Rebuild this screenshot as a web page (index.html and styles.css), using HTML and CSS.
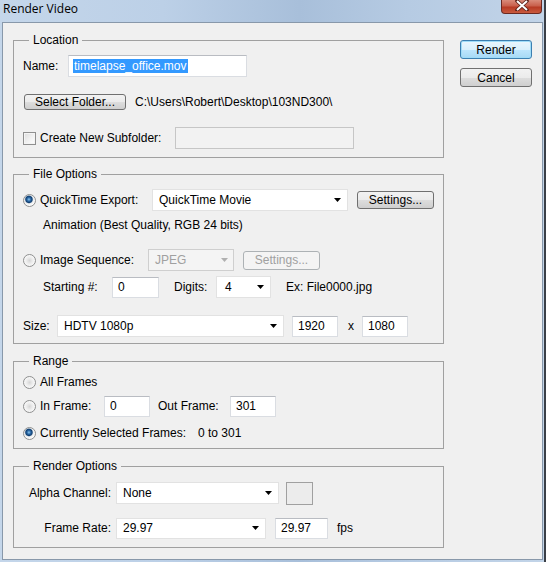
FILE: index.html
```html
<!DOCTYPE html>
<html>
<head>
<meta charset="utf-8">
<link rel="stylesheet" href="styles.css">
</head>
<body>
<div class="window">
  <div class="titlebar">
    <span class="title">Render Video</span>
    <div class="close">
      <svg width="14" height="11" viewBox="0 0 14 11"><path d="M2 1 L12 10 M12 1 L2 10" stroke="#5a2018" stroke-width="3.6" stroke-linecap="round"/><path d="M2 1 L12 10 M12 1 L2 10" stroke="#ffffff" stroke-width="2"/></svg>
    </div>
  </div>
  <div class="client">
    <div class="main">
      <fieldset class="group g-location">
        <legend>Location</legend>
        <div class="gbody col-14">
          <div class="row">
            <span class="lbl w45">Name:</span>
            <div class="input w179 h22"><span class="sel-text">timelapse_office.mov</span></div>
          </div>
          <div class="row">
            <div class="btn w102 ml1">Select Folder...</div>
            <span class="ml9">C:\Users\Robert\Desktop\103ND300\</span>
          </div>
          <div class="row">
            <span class="check"></span>
            <span class="lbl ml4 w135">Create New Subfolder:</span>
            <div class="input disabled w179 h22"></div>
          </div>
        </div>
      </fieldset>

      <fieldset class="group g-file">
        <legend>File Options</legend>
        <div class="gbody">
          <div class="row">
            <span class="radio on"></span>
            <span class="lbl ml4 w112">QuickTime Export:</span>
            <div class="select w196 h22"><span class="stext">QuickTime Movie</span><svg class="arrow" width="7" height="4" viewBox="0 0 7 4"><polygon points="0,0 7,0 3.5,4" fill="#000"/></svg></div>
            <div class="btn w77 ml9 h18">Settings...</div>
          </div>
          <div class="row text-row mt7">
            <span class="ml20">Animation (Best Quality, RGB 24 bits)</span>
          </div>
          <div class="row mt17">
            <span class="radio"></span>
            <span class="lbl ml4 w108">Image Sequence:</span>
            <div class="select dis w86 h22"><span class="stext">JPEG</span><svg class="arrow" width="7" height="4" viewBox="0 0 7 4"><polygon points="0,0 7,0 3.5,4" fill="#b0b0b0"/></svg></div>
            <div class="btn btn-dis w77 ml9 h19">Settings...</div>
          </div>
          <div class="row mt5">
            <span class="lbl ml20 w69">Starting #:</span>
            <div class="input w47 h21">0</div>
            <span class="lbl ml15 w42">Digits:</span>
            <div class="select w55 h22"><span class="stext s-digits">4</span><svg class="arrow" width="7" height="4" viewBox="0 0 7 4"><polygon points="0,0 7,0 3.5,4" fill="#000"/></svg></div>
            <span class="ml15">Ex: File0000.jpg</span>
          </div>
          <div class="row mt17">
            <span class="lbl w34">Size:</span>
            <div class="select w227 h22"><span class="stext s-size">HDTV 1080p</span><svg class="arrow" width="7" height="4" viewBox="0 0 7 4"><polygon points="0,0 7,0 3.5,4" fill="#000"/></svg></div>
            <div class="input ml8 w46 h21">1920</div>
            <span class="lbl ml10 w14">x</span>
            <div class="input w46 h21">1080</div>
          </div>
        </div>
      </fieldset>

      <fieldset class="group g-range">
        <legend>Range</legend>
        <div class="gbody">
          <div class="row">
            <span class="radio"></span>
            <span class="lbl ml4">All Frames</span>
          </div>
          <div class="row mt2">
            <span class="radio"></span>
            <span class="lbl ml4 w64">In Frame:</span>
            <div class="input w46 h21">0</div>
            <span class="lbl ml8 w72">Out Frame:</span>
            <div class="input w46 h21">301</div>
          </div>
          <div class="row mt5">
            <span class="radio on"></span>
            <span class="lbl ml4 w158">Currently Selected Frames:</span>
            <span>0 to 301</span>
          </div>
        </div>
      </fieldset>

      <fieldset class="group g-render">
        <legend>Render Options</legend>
        <div class="gbody">
          <div class="row">
            <span class="lbl w88 right">Alpha Channel:</span>
            <div class="select ml5 w163 h22"><span class="stext">None</span><svg class="arrow" width="7" height="4" viewBox="0 0 7 4"><polygon points="0,0 7,0 3.5,4" fill="#000"/></svg></div>
            <div class="swatch ml7"></div>
          </div>
          <div class="row mt13">
            <span class="lbl w88 right">Frame Rate:</span>
            <div class="select ml5 w150 h21"><span class="stext">29.97</span><svg class="arrow" width="7" height="4" viewBox="0 0 7 4"><polygon points="0,0 7,0 3.5,4" fill="#000"/></svg></div>
            <div class="input ml9 w53 h21">29.97</div>
            <span class="ml9">fps</span>
          </div>
        </div>
      </fieldset>
    </div>
    <div class="side">
      <div class="btn btn-default w72 h19">Render</div>
      <div class="btn w72 h19">Cancel</div>
    </div>
  </div>
</div>
</body>
</html>
```

FILE: styles.css
```css
html, body {
  margin: 0;
  padding: 0;
}
body {
  background: #3a3f47;
  width: 546px;
  height: 562px;
  overflow: hidden;
  font-family: "Liberation Sans", Arial, sans-serif;
  font-size: 12px;
  color: #000;
}
.window {
  width: 544px;
  height: 562px;
  background: linear-gradient(90deg, #c4d6ea 0%, #bcd0e7 30%, #a8bfda 55%, #b6cbe3 75%, #c2d4e8 100%);
  display: flex;
  flex-direction: column;
}
.titlebar {
  height: 22px;
  display: flex;
  align-items: flex-start;
  flex: none;
}
.title {
  font-family: "Open Sans", "Noto Sans", sans-serif;
  font-size: 12px;
  line-height: 18px;
  margin-left: 3px;
  margin-top: 0;
  color: #000;
}
.close {
  margin-left: auto;
  margin-right: 2px;
  width: 39px;
  height: 13px;
  border: 1px solid #6b2a22;
  border-top: none;
  border-radius: 0 0 4px 4px;
  background: linear-gradient(#d98b7a 0%, #c9604c 45%, #b73a24 55%, #c95a3e 100%);
  display: flex;
  align-items: center;
  justify-content: center;
}
.close svg { margin-top: -2px; }
.client {
  margin-left: 2px;
  width: 541px;
  height: 538px;
  box-sizing: border-box;
  border: 1px solid #8898aa;
  background: #f0f0f0;
  display: flex;
  align-items: flex-start;
}
.main {
  margin-left: 10px;
  width: 431px;
  display: flex;
  flex-direction: column;
}
.side {
  margin-left: 16px;
  padding-top: 17px;
  display: flex;
  flex-direction: column;
  gap: 9px;
}
.group {
  margin: 0;
  padding: 0;
  border: 1px solid #a0a0a0;
  min-inline-size: 0;
}
.group legend {
  margin-left: 15px;
  padding: 0 4px;
  line-height: 14px;
  font-size: 12px;
}
.g-location { margin-top: 10px; }
.g-file { margin-top: 9px; }
.g-range { margin-top: 10px; }
.g-render { margin-top: 10px; }
.g-location .gbody { padding: 8px 0 8px 9px; }
.g-file .gbody { padding: 8px 0 6px 9px; }
.g-range .gbody { padding: 3px 0 4px 9px; }
.g-render .gbody { padding: 9px 0 8px 9px; }
.gbody { display: flex; flex-direction: column; }
.col-14 { gap: 14px; }
.row {
  display: flex;
  align-items: center;
  height: 22px;
  white-space: nowrap;
}
.text-row { height: 14px; }
.lbl { flex: none; }
.right { text-align: right; }

.input {
  box-sizing: border-box;
  background: #fff;
  border: 1px solid #dadde2;
  border-top-color: #b9bcc2;
  padding-left: 5px;
  display: flex;
  align-items: center;
  flex: none;
}
.input.disabled {
  background: #f2f2f2;
  border: 1px solid #c6c6c6;
}
.sel-text {
  background: #3399ff;
  color: #fff;
  line-height: 14px;
  padding: 0 1px;
  margin-left: -1px;
}
.select {
  box-sizing: border-box;
  background: #fff;
  border: 1px solid #e2e2e2;
  display: flex;
  align-items: center;
  flex: none;
}
.select .stext { flex: 1; padding-left: 6px; }
.select .arrow { margin-right: 6px; flex: none; }
.select .s-size { padding-left: 6px; }
.select .s-digits { padding-left: 8px; }
.select.dis { background: #f4f4f4; border-color: #cfcfcf; color: #a0a0a0; }
.select.dis .arrow { margin-right: 5px; }

.btn {
  box-sizing: border-box;
  border: 1px solid #707070;
  border-radius: 3px;
  background: linear-gradient(#f2f2f2 0%, #ebebeb 50%, #dddddd 51%, #cfcfcf 100%);
  display: flex;
  align-items: center;
  justify-content: center;
  flex: none;
  line-height: 14px;
}
.btn-default {
  border-color: #3c7fb1;
  box-shadow: inset 0 0 0 1px #9fdcf8;
  background: linear-gradient(#eaf6fd 0%, #d9f0fc 50%, #bee6fd 51%, #a7d9f5 100%);
}
.btn-dis {
  border-color: #adb2b5;
  background: #f4f4f4;
  color: #a0a0a0;
}
.radio {
  box-sizing: border-box;
  width: 13px;
  height: 13px;
  border-radius: 50%;
  border: 1px solid #8e8f8f;
  background: radial-gradient(circle at 50% 50%, #d6d6d6 0, #ececec 3px, #fbfbfb 6px);
  flex: none;
}
.radio.on {
  background: radial-gradient(circle at 45% 40%, #8ec8f0 0, #2c6aa7 1.8px, #123f70 3.2px, #7e9bb8 3.8px, #ececec 4.3px, #fbfbfb 6px);
}
.check {
  box-sizing: border-box;
  width: 13px;
  height: 13px;
  border: 1px solid #8f8f8f;
  background: linear-gradient(135deg, #dcdcdc 0%, #f0f0f0 50%, #ffffff 100%);
  box-shadow: inset 0 0 0 1px #f4f4f4;
  flex: none;
}
.swatch {
  box-sizing: border-box;
  width: 27px;
  height: 23px;
  border: 1px solid #a0a0a0;
  background: #ececec;
  flex: none;
}

.ml1 { margin-left: 1px; }
.ml4 { margin-left: 4px; }
.ml5 { margin-left: 5px; }
.ml7 { margin-left: 7px; }
.ml8 { margin-left: 8px; }
.ml9 { margin-left: 9px; }
.ml10 { margin-left: 10px; }
.ml15 { margin-left: 15px; }
.ml20 { margin-left: 20px; }
.mt2 { margin-top: 2px; }
.mt5 { margin-top: 5px; }
.mt7 { margin-top: 7px; }
.mt13 { margin-top: 13px; }
.mt17 { margin-top: 17px; }

.w14 { width: 14px; }
.w34 { width: 34px; }
.w42 { width: 42px; }
.w45 { width: 45px; }
.w46 { width: 46px; }
.w47 { width: 47px; }
.w53 { width: 53px; }
.w55 { width: 55px; }
.w64 { width: 64px; }
.w69 { width: 69px; }
.w72 { width: 72px; }
.w77 { width: 77px; }
.w86 { width: 86px; }
.w88 { width: 88px; }
.w102 { width: 102px; }
.w108 { width: 108px; }
.w112 { width: 112px; }
.w135 { width: 135px; }
.w150 { width: 150px; }
.w158 { width: 158px; }
.w163 { width: 163px; }
.w179 { width: 179px; }
.w196 { width: 196px; }
.w227 { width: 227px; }
.h18 { height: 18px; }
.h19 { height: 19px; }
.h21 { height: 21px; }
.h22 { height: 22px; }
```
